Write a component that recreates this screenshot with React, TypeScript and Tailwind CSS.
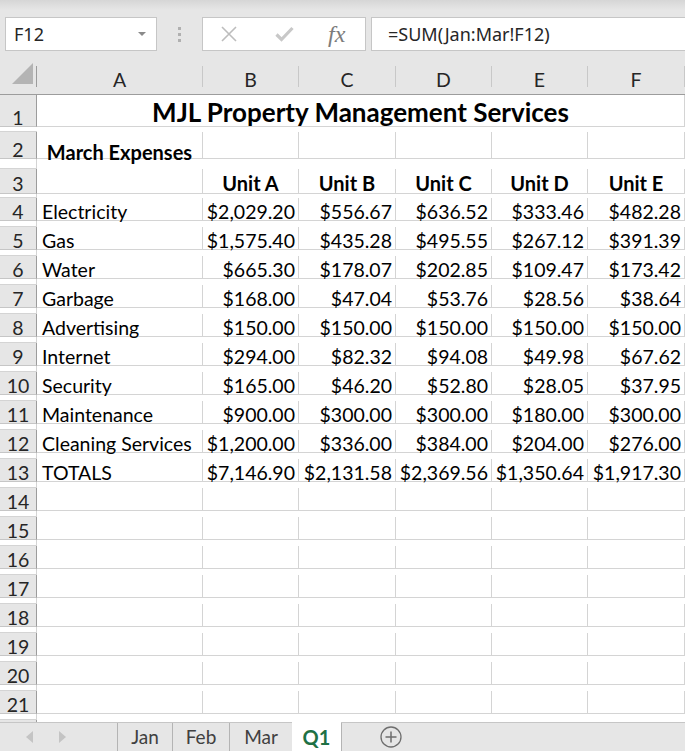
const cols = "grid grid-cols-[37px_166px_96px_97px_96px_96px_1fr]";

const data: string[][] = [
  ["Electricity", "$2,029.20", "$556.67", "$636.52", "$333.46", "$482.28"],
  ["Gas", "$1,575.40", "$435.28", "$495.55", "$267.12", "$391.39"],
  ["Water", "$665.30", "$178.07", "$202.85", "$109.47", "$173.42"],
  ["Garbage", "$168.00", "$47.04", "$53.76", "$28.56", "$38.64"],
  ["Advertising", "$150.00", "$150.00", "$150.00", "$150.00", "$150.00"],
  ["Internet", "$294.00", "$82.32", "$94.08", "$49.98", "$67.62"],
  ["Security", "$165.00", "$46.20", "$52.80", "$28.05", "$37.95"],
  ["Maintenance", "$900.00", "$300.00", "$300.00", "$180.00", "$300.00"],
  ["Cleaning Services", "$1,200.00", "$336.00", "$384.00", "$204.00", "$276.00"],
  ["TOTALS", "$7,146.90", "$2,131.58", "$2,369.56", "$1,350.64", "$1,917.30"],
];

const font = { fontFamily: "Lato, 'Noto Sans', sans-serif" };

function RowHead({ n }: { n: number }) {
  return (
    <div className="flex items-end justify-center pb-0 bg-[#e6e6e6] border-r border-b border-r-[#9c9c9c] border-b-[#c6c6c6] text-[19.5px] leading-[17.5px] text-[#262626]">
      {n}
    </div>
  );
}

function Cell({ children, align = "left", bold = false, tight = false }: { children?: React.ReactNode; align?: "left" | "right" | "center"; bold?: boolean; tight?: boolean }) {
  const a = align === "right" ? "justify-end pr-[3px]" : align === "center" ? "justify-center" : "justify-start pl-[5px]";
  const t = bold ? (tight ? "font-bold text-[20px] leading-[12px]" : "font-bold text-[20px] leading-[20px]") : "text-[19.5px] leading-[17.5px]";
  return (
    <div className={`flex items-end pb-0 border-r border-b border-[#d4d4d4] whitespace-nowrap overflow-visible text-black ${a} ${t}`}>
      {children}
    </div>
  );
}

function Row({ n, h, cells }: { n: number; h: string; cells: React.ReactNode[] }) {
  return (
    <div className={`${cols} ${h} shrink-0`}>
      <RowHead n={n} />
      {cells}
    </div>
  );
}

export default function App() {
  const empty = Array.from({ length: 8 }, (_, i) => 14 + i);
  return (
    <div className="w-[685px] h-[751px] overflow-hidden bg-[#e6e6e6] flex flex-col" style={font}>
      {/* formula bar */}
      <div className="h-[66px] shrink-0 bg-[#e6e6e6]">
        <div className="h-[10px] bg-gradient-to-b from-[#d6d6d6] to-[#e6e6e6]" />
        <div className="flex items-start pt-[7px] pl-[5px]">
          <div className="w-[152px] h-[34px] bg-white border border-[#c6c6c6] flex items-center justify-between pl-[8px] pr-[10px]">
            <span className="text-[18px] text-[#262626]" style={{ fontFamily: "'Noto Sans', sans-serif" }}>F12</span>
            <svg width="8" height="5" viewBox="0 0 8 5"><path d="M0 0h8L4 4z" fill="#8a8a8a" /></svg>
          </div>
          <div className="w-[45px] h-[34px] flex flex-col items-center justify-center gap-[3px]">
            <span className="w-[3px] h-[3px] bg-[#b0b0b0]" />
            <span className="w-[3px] h-[3px] bg-[#b0b0b0]" />
            <span className="w-[3px] h-[3px] bg-[#b0b0b0]" />
          </div>
          <div className="w-[164px] h-[34px] bg-white border border-[#c6c6c6] flex items-center">
            <svg width="18" height="18" viewBox="0 0 18 18" className="ml-[17px]">
              <path d="M2 2L16 16M16 2L2 16" stroke="#bdbdbd" strokeWidth="1.6" fill="none" />
            </svg>
            <svg width="19" height="16" viewBox="0 0 19 16" className="ml-[37px]">
              <path d="M1.5 8.5L6.5 13.5L17.5 2" stroke="#c8c8c8" strokeWidth="3.2" fill="none" />
            </svg>
            <span className="ml-[34px] text-[24px] italic text-[#7c7c7c] leading-none" style={{ fontFamily: "'Liberation Serif', serif" }}>fx</span>
          </div>
          <div className="ml-[5px] flex-1 h-[34px] bg-white border border-[#c6c6c6] border-r-0 flex items-center pl-[16px]">
            <span className="text-[18px] text-[#262626]" style={{ fontFamily: "'Noto Sans', sans-serif" }}>=SUM(Jan:Mar!F12)</span>
          </div>
        </div>
      </div>

      {/* column headers */}
      <div className={`${cols} h-[29px] shrink-0 bg-[#e6e6e6] border-b border-[#9c9c9c]`}>
        <div className="relative border-r border-[#9c9c9c]">
          <svg width="21" height="21" viewBox="0 0 21 21" className="absolute right-[3px] bottom-[3px]">
            <path d="M21 0V21H0z" fill="#b4b4b4" />
          </svg>
        </div>
        {["A", "B", "C", "D", "E", "F", ""].map((c, i) => (
          <div key={i} className={`flex items-end justify-center pb-0 text-[19.5px] leading-[13.5px] text-[#262626] ${i < 6 ? "border-r border-[#c8c8c8]" : ""}`}>
            {c}
          </div>
        ))}
      </div>

      <div className="bg-white shrink-0 flex flex-col">
        {/* row 1 merged title */}
        <div className={`${cols} h-[37px] shrink-0`}>
          <RowHead n={1} />
          <div className="col-span-6 flex items-end justify-center pb-[1px] border-r border-b border-[#d4d4d4] text-[26px] leading-[26px] font-bold text-black">
            MJL Property Management Services
          </div>
          <div className="border-b border-[#d4d4d4]" />
        </div>
        <Row
          n={2}
          h="h-[37px]"
          cells={[
            <Cell key="a" align="center" bold tight>March Expenses</Cell>,
            <Cell key="b" />, <Cell key="c" />, <Cell key="d" />, <Cell key="e" />, <Cell key="f" />, <Cell key="g" />,
          ]}
        />
        <Row
          n={3}
          h="h-[29px]"
          cells={[
            <Cell key="a" />,
            ...["Unit A", "Unit B", "Unit C", "Unit D", "Unit E"].map((u) => (
              <Cell key={u} align="center" bold>{u}</Cell>
            )),
            <Cell key="g" />,
          ]}
        />
        {data.map((r, i) => (
          <Row
            key={i}
            n={4 + i}
            h="h-[29px]"
            cells={[
              <Cell key="a">{r[0]}</Cell>,
              ...r.slice(1).map((v, j) => (
                <Cell key={j} align="right">{v}</Cell>
              )),
              <Cell key="g" />,
            ]}
          />
        ))}
        {empty.map((n) => (
          <Row
            key={n}
            n={n}
            h="h-[29px]"
            cells={[0, 1, 2, 3, 4, 5, 6].map((k) => <Cell key={k} />)}
          />
        ))}
      </div>

      {/* sheet tabs */}
      <div className="h-[2px] shrink-0 bg-white grid grid-cols-[37px_1fr]">
        <div className="bg-[#e6e6e6] border-r border-[#9c9c9c]" />
        <div />
      </div>
      <div className="h-[29px] shrink-0 flex items-stretch border-t border-[#c6c6c6] bg-[#e6e6e6]">
        <div className="w-[117px] flex items-center gap-[26px] pl-[26px]">
          <svg width="7" height="12" viewBox="0 0 7 12"><path d="M7 0V12L0 6z" fill="#c4c4c4" /></svg>
          <svg width="7" height="12" viewBox="0 0 7 12"><path d="M0 0V12L7 6z" fill="#c4c4c4" /></svg>
        </div>
        {["Jan", "Feb", "Mar"].map((t, i) => (
          <div key={t} className={`flex items-center justify-center border-l border-[#b4b4b4] text-[19px] text-[#404040] ${i === 0 ? "w-[55px]" : i === 1 ? "w-[57px]" : "w-[63px]"}`}>
            {t}
          </div>
        ))}
        <div className="w-[49px] -mt-[1px] bg-white flex items-center justify-center text-[20px] font-bold text-[#1e7145]">Q1</div>
        <div className="w-[1px] bg-[#b4b4b4]" />
        <div className="flex-1 flex items-center pl-[38px]">
          <svg width="22" height="22" viewBox="0 0 22 22">
            <circle cx="11" cy="11" r="10" stroke="#6e6e6e" strokeWidth="1.3" fill="none" />
            <path d="M11 5.5V16.5M5.5 11H16.5" stroke="#6e6e6e" strokeWidth="1.5" />
          </svg>
        </div>
      </div>
    </div>
  );
}
